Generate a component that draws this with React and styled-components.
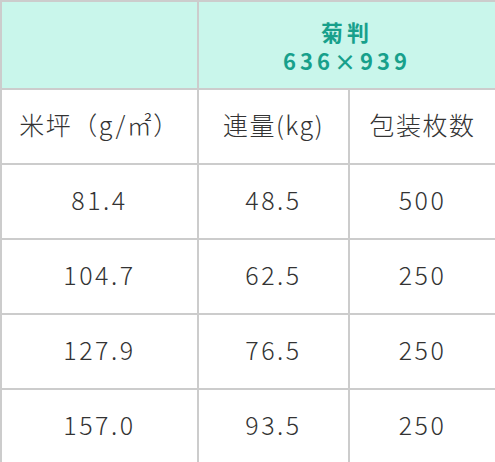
import React from 'react';
import styled, { createGlobalStyle } from 'styled-components';

const GlobalStyle = createGlobalStyle`
  html, body {
    margin: 0;
    padding: 0;
    background: #ffffff;
  }
  body {
    font-family: "Noto Sans CJK JP", "Noto Sans", sans-serif;
    color: #333333;
  }
`;

const Table = styled.table`
  width: 495px;
  border-collapse: collapse;
  table-layout: fixed;
`;

const HeadCell = styled.th`
  background: #c9f6eb;
  border: 2px solid #cccccc;
  height: 84px;
  padding: 2px 0 0;
  color: #17a08b;
  font-size: 22px;
  font-weight: 700;
  line-height: 29px;
  letter-spacing: 4px;
  text-align: center;
  vertical-align: middle;
`;

const Cell = styled.td`
  border: 2px solid #cccccc;
  height: 68px;
  padding: 0 0 5px;
  font-size: 25px;
  font-weight: 300;
  letter-spacing: ${props => props.label ? '1.5px' : '2.5px'};
  text-align: center;
  vertical-align: middle;
  color: #333333;
`;

const rows = [
  ['81.4', '48.5', '500'],
  ['104.7', '62.5', '250'],
  ['127.9', '76.5', '250'],
  ['157.0', '93.5', '250'],
];

export default function App() {
  return (
    <>
      <GlobalStyle />
      <Table>
        <colgroup>
          <col style={{ width: 197 }} />
          <col style={{ width: 151 }} />
          <col style={{ width: 147 }} />
        </colgroup>
        <thead>
          <tr>
            <HeadCell />
            <HeadCell colSpan={2}>
              菊判<br />636×939
            </HeadCell>
          </tr>
        </thead>
        <tbody>
          <tr>
            <Cell label="1">米坪（g/㎡）</Cell>
            <Cell label="1">連量(kg)</Cell>
            <Cell label="1">包装枚数</Cell>
          </tr>
          {rows.map((r, i) => (
            <tr key={i}>
              {r.map((v, j) => (
                <Cell key={j}>{v}</Cell>
              ))}
            </tr>
          ))}
        </tbody>
      </Table>
    </>
  );
}
